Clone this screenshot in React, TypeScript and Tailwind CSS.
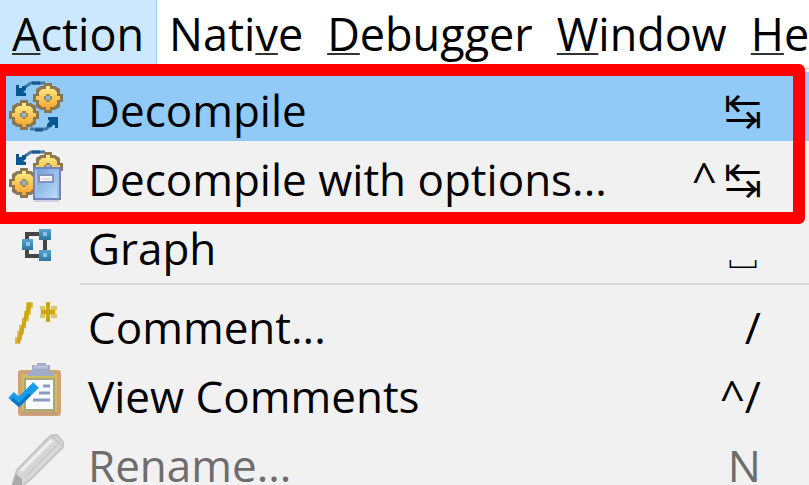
import type { ReactNode } from 'react';
import { clsx } from 'clsx';

type Menu = { before?: string; key: string; after: string; active?: boolean };

type Item = {
  label: string;
  icon: ReactNode;
  modifier?: string;
  shortcut: string;
  symbol?: boolean;
  active?: boolean;
  disabled?: boolean;
};

const menus: Menu[] = [
  { key: 'A', after: 'ction', active: true },
  { before: 'Nati', key: 'v', after: 'e' },
  { key: 'D', after: 'ebugger' },
  { key: 'W', after: 'indow' },
  { key: 'H', after: 'elp' },
];

function Gradients() {
  return (
    <svg className="absolute size-0" aria-hidden="true">
      <defs>
        <linearGradient id="gold" x1="0" y1="0" x2="0" y2="1">
          <stop offset="0" stopColor="#ffef86" />
          <stop offset="1" stopColor="#f6a22c" />
        </linearGradient>
        <linearGradient id="device" x1="0" y1="0" x2="1" y2="1">
          <stop offset="0" stopColor="#6f9ad8" />
          <stop offset="1" stopColor="#bfe4fb" />
        </linearGradient>
        <linearGradient id="node" x1="0" y1="0" x2="0" y2="1">
          <stop offset="0" stopColor="#55a5cf" />
          <stop offset="1" stopColor="#2f739f" />
        </linearGradient>
      </defs>
    </svg>
  );
}

function Gear({ x, y }: { x: number; y: number }) {
  return (
    <g transform={`translate(${x} ${y})`}>
      <path
        d="M-4-15H4V-12H7L12-9V-4H15V4H12V9L7 12H4V15H-4V12H-7L-12 9V4H-15V-4H-12V-9L-7-12H-4Z"
        fill="#8b7654"
      />
      <path d="M-2-12H2V-9H6L9-6V-2H12V2H9V6L6 9H2V12H-2V9H-6L-9 6V2H-12V-2H-9V-6L-6-9H-2Z" fill="url(#gold)" />
      <path d="M-4-2H-2V-4H2V-2H4V2H2V4H-2V2H-4Z" fill="#a08a55" />
      <rect x="-2" y="-2" width="4" height="4" fill="#8fb4cf" />
    </g>
  );
}

function TopArrow() {
  return (
    <>
      <path d="M17 9L23 5H37" fill="none" stroke="#3f78a4" strokeWidth="3" />
      <path d="M24 5H32" stroke="#155a91" strokeWidth="3" />
      <path d="M8 7H11V10H14V8H18V12L15 14 18 15V18H8Z" fill="#07568f" />
    </>
  );
}

function Icon({ children }: { children: ReactNode }) {
  return (
    <svg viewBox="0 0 56 57" className="h-[57px] w-14 shrink-0 overflow-visible" aria-hidden="true">
      {children}
    </svg>
  );
}

const decompileIcon = (
  <Icon>
    <TopArrow />
    <Gear x={40} y={20} />
    <path d="M22 51H38L44 46" fill="none" stroke="#3f78a4" strokeWidth="3" />
    <path d="M27 52H35" stroke="#155a91" strokeWidth="3" />
    <path d="M40 39H50V50H47V47H44V49H39V46L42 43 40 42Z" fill="#07568f" />
    <Gear x={16} y={37} />
  </Icon>
);

const optionsIcon = (
  <Icon>
    <TopArrow />
    <Gear x={40} y={20} />
    <Gear x={16} y={36} />
    <rect x="26" y="52" width="25" height="3" fill="#cbd0e4" />
    <rect x="26" y="21" width="26" height="31" fill="url(#device)" stroke="#7185bb" strokeWidth="2" />
    <path d="M28 23V50M50 23V50" stroke="#9cc0ea" strokeWidth="2" />
    <rect x="31" y="28" width="14" height="7" fill="#f6f8fc" stroke="#8290be" strokeWidth="2" />
    <path d="M33 32H43" stroke="#c6bfd2" strokeWidth="1" />
  </Icon>
);

const graphIcon = (
  <Icon>
    <path d="M37 18H19V40H37Z" fill="none" stroke="#454545" strokeWidth="4" />
    <rect x="31" y="13" width="12" height="11" fill="url(#node)" />
    <rect x="14" y="23" width="11" height="11" fill="url(#node)" />
    <rect x="31" y="34" width="12" height="11" fill="url(#node)" />
    <path d="M35 18H39M18 28H22M35 39H39" stroke="#8cc3e0" strokeWidth="4" />
  </Icon>
);

const commentIcon = (
  <Icon>
    <path d="M18 7H25V13H23V20H21V26H18V33H16V39H14V45H12V49H7V42H9V36H11V30H14V23H16V16H18Z" fill="#dcc255" />
    <path d="M22 8L10 48" stroke="#cda713" strokeWidth="4" />
    <path d="M32 11H37V14H43V11H49V15L46 17 49 19V23H43V20H37V23H32V19L35 17 32 15Z" fill="#dcc567" />
    <path d="M40 7V27M33 17H47" stroke="#cda713" strokeWidth="4" />
  </Icon>
);

const viewCommentsIcon = (
  <Icon>
    <rect x="12" y="8" width="39" height="42" rx="1" fill="#d0bb62" stroke="#d3a377" strokeWidth="4" />
    <path d="M14 49H49" stroke="#bf9d78" strokeWidth="3" />
    <rect x="17" y="15" width="29" height="31" fill="#fbfcff" stroke="#a9a878" strokeWidth="2" />
    <path d="M24 1H29V-1H38V1H42V8H46V12H20V8H24Z" fill="#a0abc8" />
    <path d="M26 3H40" stroke="#b8c1d9" strokeWidth="3" />
    <path d="M35 22H42M31 29H42M25 36H42" stroke="#8a97c2" strokeWidth="3" />
    <path d="M3 31L11 38L28 21" fill="none" stroke="#159cea" strokeWidth="8" />
    <path d="M4 35L11 41L22 30" fill="none" stroke="#0874c2" strokeWidth="3" />
  </Icon>
);

const renameIcon = (
  <Icon>
    <path d="M4 53L9 37 40 5 44 2H49L55 9V14L23 46 14 53Z" fill="#d7d7d7" stroke="#c6c6c6" strokeWidth="2" />
    <path d="M13 38L44 7" stroke="#f0f0f0" strokeWidth="3" />
    <path d="M18 43L49 12" stroke="#cdcdcd" strokeWidth="2" />
    <path d="M44 3L54 13" stroke="#c9c9c9" strokeWidth="3" />
    <path d="M4 53L8 41 14 46V53Z" fill="#aaa" />
  </Icon>
);

const groups: Item[][] = [
  [
    { label: 'Decompile', icon: decompileIcon, shortcut: '↹', symbol: true, active: true },
    { label: 'Decompile with options...', icon: optionsIcon, modifier: '^', shortcut: '↹', symbol: true },
    { label: 'Graph', icon: graphIcon, shortcut: '␣', symbol: true },
  ],
  [
    { label: 'Comment...', icon: commentIcon, shortcut: '/' },
    { label: 'View Comments', icon: viewCommentsIcon, modifier: '^', shortcut: '/' },
    { label: 'Rename...', icon: renameIcon, shortcut: 'N', disabled: true },
  ],
];

function MenuItem({ item }: { item: Item }) {
  return (
    <button
      type="button"
      role="menuitem"
      disabled={item.disabled}
      className={clsx(
        'flex h-[69px] w-full items-center pl-2 pr-12 text-left whitespace-nowrap',
        item.active && 'bg-[#91c9f7]',
        item.disabled && 'text-[#6d6d6d]',
      )}
    >
      {item.icon}
      <span className="ml-6 flex-1 pt-1.5">{item.label}</span>
      <span className="flex items-baseline pt-1.5">
        {item.modifier}
        <span className={clsx(item.symbol && 'ml-2 font-["Noto_Sans_CJK_JP","DejaVu_Sans_Mono",sans-serif] text-[36px] font-medium')}>
          {item.shortcut}
        </span>
      </span>
    </button>
  );
}

export default function App() {
  return (
    <div className='relative h-screen overflow-hidden bg-[#f1f1f1] font-["Open_Sans","Noto_Sans",sans-serif] text-[44px] leading-[60px] text-black'>
      <Gradients />

      <nav className="flex h-[68px] bg-white text-[45px] whitespace-nowrap">
        {menus.map((menu) => (
          <button
            key={menu.key}
            type="button"
            className={clsx('shrink-0 px-3 pb-px', menu.active && 'border-r border-[#99d1ff] bg-[#cce8ff]')}
          >
            {menu.before}
            <span className="underline decoration-[#333] decoration-2 underline-offset-2 [text-decoration-skip-ink:none]">
              {menu.key}
            </span>
            {menu.after}
          </button>
        ))}
      </nav>

      <div role="menu" className="border-t border-[#ccc] pt-[3px]">
        {groups.map((items, i) => (
          <div key={i}>
            {i > 0 && <hr className="my-1 ml-20 border-t-2 border-[#d9d9d9]" />}
            {items.map((item) => (
              <MenuItem key={item.label} item={item} />
            ))}
          </div>
        ))}
      </div>

      {/* Highlight frame around both decompile commands */}
      <div className="pointer-events-none absolute top-16 right-1 -left-1.5 h-40 rounded-md border-12 border-[#f00]" />
    </div>
  );
}
